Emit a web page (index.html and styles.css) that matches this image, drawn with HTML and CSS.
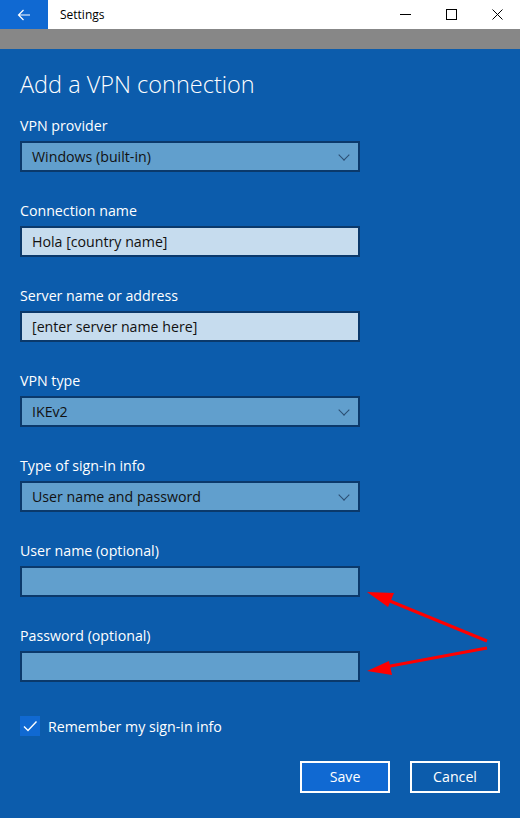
FILE: index.html
```html
<!DOCTYPE html>
<html lang="en">
<head>
    <meta charset="UTF-8">
    <title>Settings</title>
    <link rel="stylesheet" href="styles.css">
</head>
<body>
    <div class="titlebar">
        <div class="back-btn">
            <svg width="14" height="12" viewBox="0 0 14 12"><path d="M13 6H1.5M6.5 1L1.5 6l5 5" fill="none" stroke="#fff" stroke-width="1.2"/></svg>
        </div>
        <div class="title">Settings</div>
        <div class="controls">
            <span class="ctl"><svg width="11" height="11" viewBox="0 0 11 11"><path d="M0 5.5h11" stroke="#000" stroke-width="1"/></svg></span>
            <span class="ctl"><svg width="11" height="11" viewBox="0 0 11 11"><rect x="0.5" y="0.5" width="10" height="10" fill="none" stroke="#000" stroke-width="1"/></svg></span>
            <span class="ctl"><svg width="11" height="11" viewBox="0 0 11 11"><path d="M0.5 0.5l10 10M10.5 0.5l-10 10" stroke="#000" stroke-width="1"/></svg></span>
        </div>
    </div>
    <div class="grayband"></div>

    <div class="main">
        <h1>Add a VPN connection</h1>

        <div class="field">
            <label>VPN provider</label>
            <div class="box select">Windows (built-in)<span class="chev"></span></div>
        </div>
        <div class="field">
            <label>Connection name</label>
            <div class="box text">Hola [country name]</div>
        </div>
        <div class="field">
            <label>Server name or address</label>
            <div class="box text">[enter server name here]</div>
        </div>
        <div class="field">
            <label>VPN type</label>
            <div class="box select">IKEv2<span class="chev"></span></div>
        </div>
        <div class="field">
            <label>Type of sign-in info</label>
            <div class="box select">User name and password<span class="chev"></span></div>
        </div>
        <div class="field">
            <label>User name (optional)</label>
            <div class="box empty"></div>
        </div>
        <div class="field last">
            <label>Password (optional)</label>
            <div class="box empty"></div>
        </div>

        <div class="remember">
            <span class="check">
                <svg width="20" height="20" viewBox="0 0 20 20"><path d="M4 10.5l4 4 8.5-9" fill="none" stroke="#fff" stroke-width="1.4"/></svg>
            </span>
            Remember my sign-in info
        </div>

        <div class="buttons">
            <div class="btn save">Save</div>
            <div class="btn">Cancel</div>
        </div>
    </div>

    <!-- red annotation arrows -->
    <svg class="arrows" width="520" height="818" viewBox="0 0 520 818">
        <g stroke="#f00" stroke-width="3" fill="#f00">
            <line x1="487" y1="641" x2="385" y2="599"/>
            <polygon points="367,592 394,593 388,607" stroke="none"/>
            <line x1="487" y1="648" x2="385" y2="667"/>
            <polygon points="367,671 389,661 392,675" stroke="none"/>
        </g>
    </svg>
</body>
</html>
```
FILE: styles.css
```css
body {
    margin: 0;
    width: 520px;
    height: 818px;
    overflow: hidden;
    font-family: "Open Sans", "Noto Sans", sans-serif;
    background: #0c5cac;
    position: relative;
}

.titlebar {
    height: 29px;
    background: #fff;
    display: flex;
    align-items: center;
}

.back-btn {
    width: 48px;
    height: 29px;
    background: #1069d2;
    display: flex;
    align-items: center;
    justify-content: center;
}

.title {
    margin-left: 12px;
    font-size: 12px;
    color: #000;
    flex: 1;
}

.controls {
    display: flex;
    height: 29px;
}

.ctl {
    width: 46px;
    display: flex;
    align-items: center;
    justify-content: center;
}

.grayband {
    height: 20px;
    background: #878787;
}

.main {
    padding: 19px 20px 0 20px;
    color: #fff;
    border-left: 1px solid #2d7bd0;
    margin-left: -1px;
}

h1 {
    margin: 0 0 16px 0;
    font-size: 23.5px;
    font-weight: 300;
    line-height: 32px;
}

.field {
    margin-bottom: 29px;
}

.field.last {
    margin-bottom: 0;
}

.field label {
    display: block;
    font-size: 14.2px;
    line-height: 20px;
    margin-bottom: 5px;
}

.box {
    width: 340px;
    height: 31px;
    box-sizing: border-box;
    border: 2px solid #0b396b;
    padding: 0 10px;
    font-size: 14.2px;
    line-height: 27px;
    color: #111;
    position: relative;
}

.select, .empty {
    background: #619fcd;
}

.text {
    background: #c6dcee;
}

.chev {
    position: absolute;
    right: 10px;
    top: 8px;
    width: 7px;
    height: 7px;
    border-right: 1px solid #2b4e72;
    border-bottom: 1px solid #2b4e72;
    transform: rotate(45deg);
}

.remember {
    margin-top: 34px;
    display: flex;
    align-items: center;
    font-size: 14.2px;
}

.check {
    width: 20px;
    height: 20px;
    background: #1069d2;
    margin-right: 8px;
    display: flex;
}

.buttons {
    display: flex;
    justify-content: flex-end;
    gap: 20px;
    margin-top: 25px;
}

.btn {
    width: 90px;
    height: 32px;
    box-sizing: border-box;
    border: 2px solid #fff;
    text-align: center;
    line-height: 28px;
    font-size: 14.2px;
    color: #fff;
}

.btn.save {
    background: #1069d2;
}

.arrows {
    position: absolute;
    left: 0;
    top: 0;
    pointer-events: none;
}
```
